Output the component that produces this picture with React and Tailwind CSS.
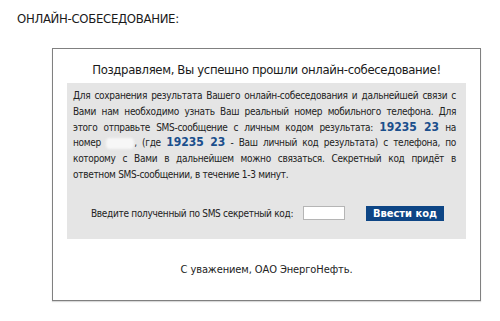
export default function App() {
  const code = (
    <b className="text-[12px] text-[#1b4f8c] font-bold tracking-normal">19235 23</b>
  );
  const line = "whitespace-nowrap text-justify [text-align-last:justify]";
  return (
    <div className="w-[500px] h-[321px] bg-white text-[#1a1a1a] font-['DejaVu_Sans_Condensed','DejaVu_Sans',sans-serif] overflow-hidden">
      <div className="pl-[17px] pt-[11px] text-[13px] leading-[16px] tracking-[-0.3px]">ОНЛАЙН-СОБЕСЕДОВАНИЕ:</div>
      <div className="ml-[52px] mt-[21px] w-[429px] h-[253px] border border-[#808080] shadow-[0_1px_1px_rgba(0,0,0,0.15)] flex flex-col">
        <div className="text-center text-[13px] leading-[16px] pt-[13px] h-[34px] tracking-[-0.35px]">
          Поздравляем, Вы успешно прошли онлайн-собеседование!
        </div>
        <div className="ml-[14px] w-[399px] h-[156px] bg-[#e5e5e5] flex flex-col">
          <div className="pl-[6px] pr-[10px] pt-[5px] text-[10px] leading-[15.8px] tracking-[-0.3px] text-[#222]">
            <div className={line}>Для сохранения результата Вашего онлайн-собеседования и дальнейшей связи с</div>
            <div className={line}>Вами нам необходимо узнать Ваш реальный номер мобильного телефона. Для</div>
            <div className={line}>этого отправьте SMS-сообщение с личным кодом результата: {code} на</div>
            <div className={line}>
              номер <span className="inline-block w-[28px] h-[11px] align-middle bg-[#f7f7f7] rounded-[4px] blur-[1px]"></span>, (где {code} - Ваш личный код результата) с телефона, по
            </div>
            <div className={line}>которому с Вами в дальнейшем можно связаться. Секретный код придёт в</div>
            <div className="whitespace-nowrap">ответном SMS-сообщении, в течение 1-3 минут.</div>
          </div>
          <div className="mt-[23px] flex items-center text-[10px] tracking-[-0.3px] text-[#222] whitespace-nowrap">
            <span className="ml-[24px] w-[209px]">Введите полученный по SMS секретный код:</span>
            <input className="ml-[3px] w-[42px] h-[14px] bg-white border border-[#b5b5b5] outline-none" />
            <button className="ml-[21px] w-[78px] h-[15px] bg-[#0d4585] text-white text-[11px] font-bold leading-[15px] tracking-normal">
              Ввести код
            </button>
          </div>
        </div>
        <div className="text-center text-[11px] leading-[14px] pt-[24px] text-[#222] tracking-[-0.1px]">С уважением, ОАО ЭнергоНефть.</div>
      </div>
    </div>
  );
}
